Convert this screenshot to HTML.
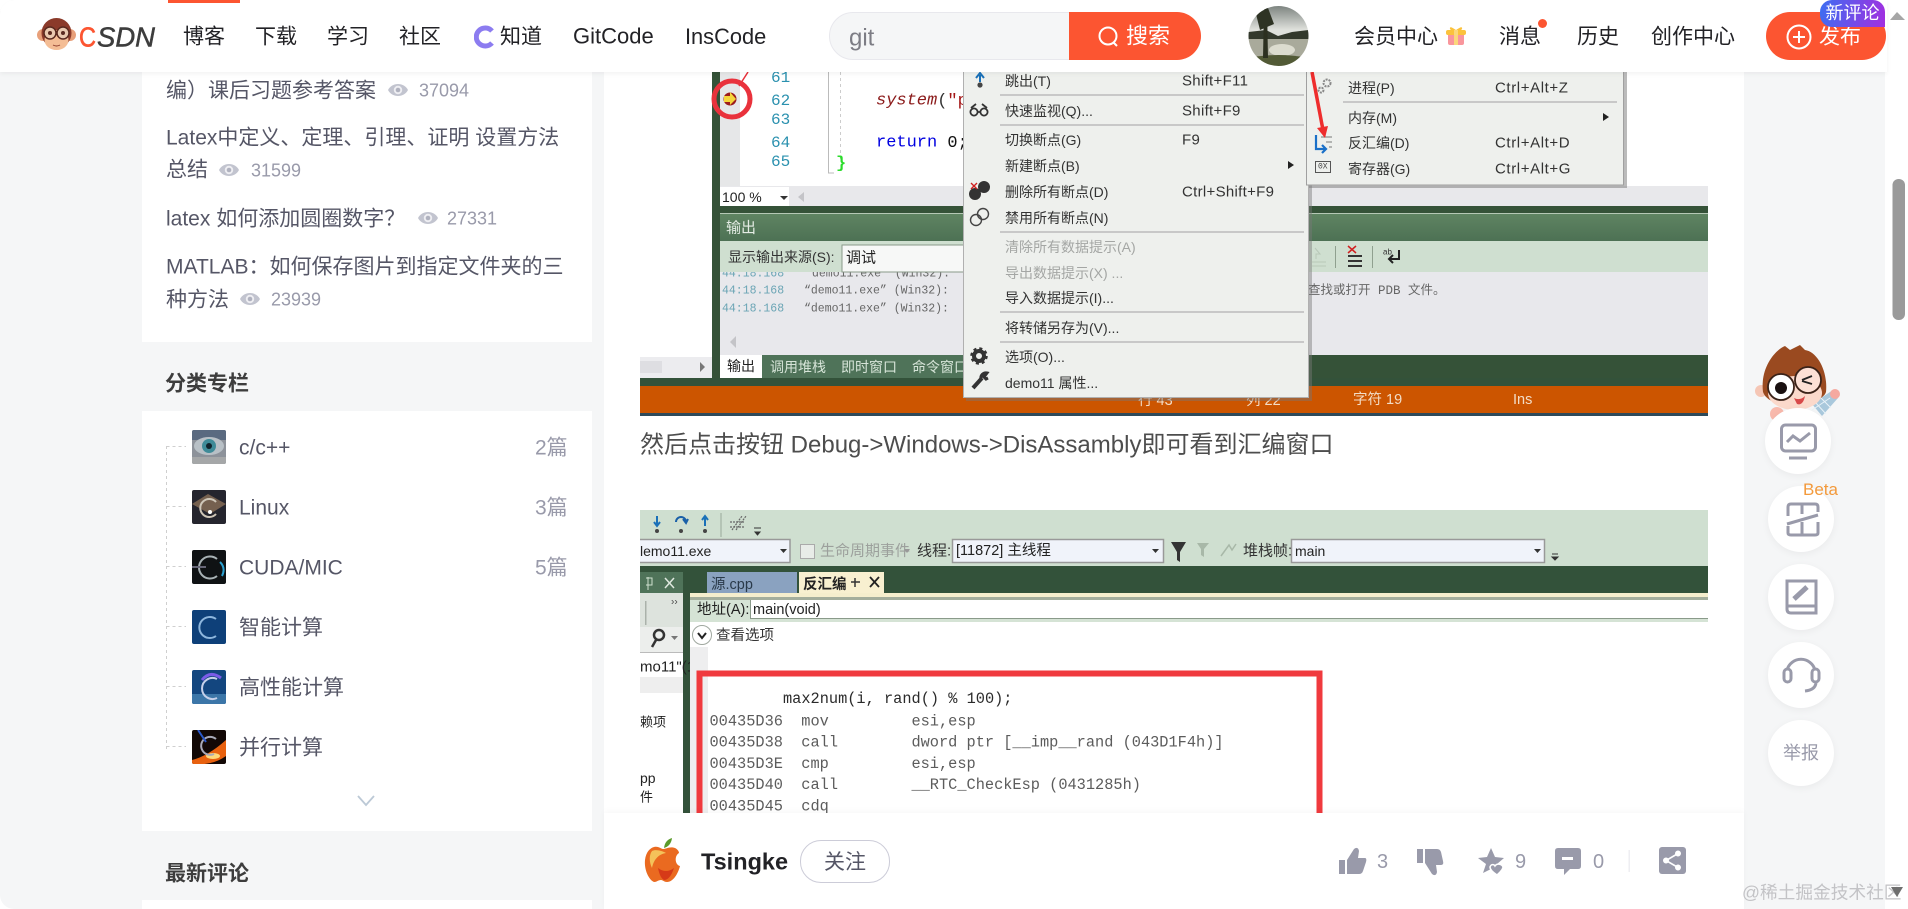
<!DOCTYPE html>
<html lang="zh-CN"><head><meta charset="utf-8"><title>CSDN</title>
<style>
html,body{margin:0;padding:0;width:1908px;height:909px;overflow:hidden;background:#fff}
body{font-family:"Liberation Sans","Noto Sans CJK SC",sans-serif;color:#222226}
#app{position:absolute;left:0;top:0;width:1908px;height:909px;overflow:hidden;border-radius:14px 0 0 14px;background:#fff}
.a{position:absolute}
.t{position:absolute;white-space:nowrap;transform:translateY(calc(-50% + 1px));line-height:1.3}
svg{display:block}
svg text{font-family:"Liberation Sans","Noto Sans CJK SC",sans-serif;dominant-baseline:central;white-space:pre}
.m{font-family:"Liberation Mono","Noto Sans CJK SC",monospace!important}
.nav{font-size:21px;color:#222226}
.side{font-size:21px;color:#555666}
.num{font-size:18px;color:#999aaa}
.cat{font-size:21px;color:#555666}
.cnt{font-size:21px;color:#999aaa}
.head{font-size:21px;font-weight:700;color:#3d3d3d}
.fab{position:absolute;width:66px;height:66px;border-radius:50%;background:#fff;box-shadow:0 2px 8px rgba(0,0,0,.05)}
.thumb{position:absolute;left:192px;width:34px;height:34px;border-radius:2px;overflow:hidden}
</style></head><body>
<div id="app">
<svg width="0" height="0" class="a"><defs>
<symbol id="eye" viewBox="0 0 20 16"><path d="M0 8C4 0 16 0 20 8C16 16 4 16 0 8Z" fill="#c2c4cf"/><circle cx="10" cy="8" r="4.200" fill="#eeeef2"/><circle cx="10" cy="8" r="2.300" fill="#b0b2bf"/></symbol>
</defs></svg>
<div class="a" style="left:0;top:0;width:1885px;height:909px;background:#f5f6f7"></div>
<div class="a" style="left:604px;top:0;width:1140px;height:909px;background:#fff"></div>
<!-- sidebar -->
<div class="a" style="left:142px;top:60px;width:450px;height:282px;background:#fff"></div>
<span class="t side" style="left:166px;top:90px">编）课后习题参考答案</span><svg class="a" style="left:388px;top:82px" width="20" height="16"><use href="#eye"/></svg><span class="t num" style="left:419px;top:90px">37094</span>
<span class="t side" style="left:166px;top:137px">Latex中定义、定理、引理、证明 设置方法</span>
<span class="t side" style="left:166px;top:169px">总结</span><svg class="a" style="left:219px;top:162px" width="20" height="16"><use href="#eye"/></svg><span class="t num" style="left:251px;top:170px">31599</span>
<span class="t side" style="left:166px;top:218px">latex 如何添加圆圈数字？</span><svg class="a" style="left:418px;top:210px" width="20" height="16"><use href="#eye"/></svg><span class="t num" style="left:447px;top:218px">27331</span>
<span class="t side" style="left:166px;top:266px">MATLAB：如何保存图片到指定文件夹的三</span>
<span class="t side" style="left:166px;top:299px">种方法</span><svg class="a" style="left:240px;top:291px" width="20" height="16"><use href="#eye"/></svg><span class="t num" style="left:271px;top:299px">23939</span>
<span class="t head" style="left:165px;top:383px">分类专栏</span>
<div class="a" style="left:142px;top:411px;width:450px;height:420px;background:#fff"></div>
<span class="t head" style="left:165px;top:873px">最新评论</span>
<div class="a" style="left:142px;top:900px;width:450px;height:9px;background:#fff"></div>
<svg class="a" style="left:160px;top:440px" width="34" height="320" fill="none" stroke="#cfcfcf" stroke-dasharray="3 3"><path d="M6.5 6V310M6.5 6.5H26M6.5 66.5H26M6.5 126.5H26M6.5 186.5H26M6.5 246.5H26M6.5 306.5H26"/></svg>
<div class="thumb" style="top:430px"><svg width="34" height="34"><rect width="34" height="34" fill="#8d929a"/><rect width="34" height="10" fill="#5a6a80"/><ellipse cx="17" cy="16" rx="15" ry="9" fill="#b8c0c6"/><circle cx="17" cy="16" r="7" fill="#3f8b98"/><circle cx="17" cy="16" r="3" fill="#10232c"/><rect y="27" width="34" height="7" fill="#a5a7a8"/></svg></div>
<div class="thumb" style="top:490px"><svg width="34" height="34"><rect width="34" height="34" fill="#25252e"/><path d="M0 14L16 4L34 14L18 24Z" fill="#75604f"/><path d="M24 12A9 9 0 1 0 24 24" fill="none" stroke="#cfc6b8" stroke-width="2"/><circle cx="18" cy="22" r="2" fill="#fff"/></svg></div>
<div class="thumb" style="top:550px"><svg width="34" height="34"><rect width="34" height="34" fill="#0f1214"/><path d="M25 9A11 11 0 1 0 25 26" fill="none" stroke="#a8b2b5" stroke-width="2"/><path d="M0 17H14" stroke="#667" stroke-width="2"/><path d="M28 12Q34 18 30 26" fill="none" stroke="#2ba0d0" stroke-width="2"/></svg></div>
<div class="thumb" style="top:610px"><svg width="34" height="34"><rect width="34" height="34" fill="#0e4079"/><path d="M24 9A10.5 10.5 0 1 0 24 26" fill="none" stroke="#8db6dd" stroke-width="2"/></svg></div>
<div class="thumb" style="top:670px"><svg width="34" height="34"><rect width="34" height="34" fill="#13467f"/><rect y="24" width="34" height="10" fill="#3c76a8"/><path d="M25 9A10.5 10.5 0 1 0 25 28" fill="none" stroke="#c5d0ea" stroke-width="2"/><path d="M10 10Q18 0 29 8" fill="none" stroke="#7a5ce8" stroke-width="3"/></svg></div>
<div class="thumb" style="top:730px"><svg width="34" height="34"><rect width="34" height="34" fill="#120806"/><path d="M0 30Q16 26 34 10V26Q20 36 0 34Z" fill="#e8610f"/><ellipse cx="21" cy="26" rx="7" ry="3" fill="#ffd97a"/><path d="M24 9A9 9 0 1 0 22 24" fill="none" stroke="#a9a9b8" stroke-width="2"/><path d="M6 0L14 12" stroke="#2a58c8" stroke-width="2"/></svg></div>
<span class="t cat" style="left:239px;top:447px">c/c++</span><span class="t cnt" style="left:535px;top:447px">2篇</span>
<span class="t cat" style="left:239px;top:507px">Linux</span><span class="t cnt" style="left:535px;top:507px">3篇</span>
<span class="t cat" style="left:239px;top:567px">CUDA/MIC</span><span class="t cnt" style="left:535px;top:567px">5篇</span>
<span class="t cat" style="left:239px;top:627px">智能计算</span>
<span class="t cat" style="left:239px;top:687px">高性能计算</span>
<span class="t cat" style="left:239px;top:747px">并行计算</span>
<svg class="a" style="left:357px;top:795px" width="18" height="12" fill="none" stroke="#bcc9d6" stroke-width="1.8"><path d="M1 1L9 10L17 1"/></svg>

<!-- screenshot 1 -->
<svg class="a" style="left:640px;top:0" width="1068" height="416" viewBox="640 0 1068 416">
<defs><linearGradient id="gh" x1="0" y1="0" x2="0" y2="1"><stop offset="0" stop-color="#5f8462"/><stop offset="1" stop-color="#4d7154"/></linearGradient></defs>
<rect x="640" y="0" width="1068" height="416" fill="#fff"/>
<rect x="640" y="357" width="72" height="21" fill="#ececef"/><rect x="640" y="361" width="22" height="12" fill="#dedee2"/><path d="M700 362L705 367L700 372Z" fill="#777"/>
<rect x="712" y="0" width="996" height="385" fill="#355238"/>
<rect x="720" y="0" width="988" height="186" fill="#fff"/><rect x="720" y="0" width="20" height="186" fill="#e6e7e8"/>
<rect x="720" y="186" width="988" height="20" fill="#e8e8eb"/>
<rect x="720" y="214" width="988" height="27" fill="url(#gh)"/><rect x="720" y="213" width="988" height="1" fill="#b5c8b5"/>
<rect x="720" y="241" width="988" height="114" fill="#e8e8ec"/>
<rect x="720" y="355" width="260" height="23" fill="#4f7359"/>
<rect x="640" y="378" width="1068" height="8" fill="#33523a"/>
<rect x="640" y="386" width="1068" height="27" fill="#cc5500"/><rect x="640" y="413" width="1068" height="3" fill="#2e4a5a"/>
<path d="M748 72L739 86" stroke="#e8303a" stroke-width="1.5"/>
<circle cx="732" cy="99" r="18" fill="none" stroke="#e9323c" stroke-width="5"/><circle cx="730" cy="99" r="6.500" fill="#9c1c1c"/><path d="M724 96H730V92L736 99L730 105V102H724Z" fill="#f5d63c"/>
<g class="m" font-size="16" fill="#2b91af"><text class="m" x="771" y="78">61</text><text class="m" x="771" y="101">62</text><text class="m" x="771" y="120">63</text><text class="m" x="771" y="143">64</text><text class="m" x="771" y="162">65</text></g>
<path d="M828.5 72V173H834" fill="none" stroke="#bbb"/><path d="M840.5 72V160" fill="none" stroke="#ccc" stroke-dasharray="3 3"/>
<text class="m" x="876" y="101" font-size="17" font-style="italic" fill="#8b1a1a">system<tspan font-style="normal" fill="#333">(</tspan><tspan font-style="normal" fill="#a31515">"p</tspan></text>
<text class="m" x="876" y="143" font-size="17" fill="#0000e0">return <tspan fill="#111">0;</tspan></text>
<text class="m" x="836" y="164" font-size="17" font-weight="700" fill="#2bdc2b">}</text>
<rect x="720" y="187" width="69" height="19" fill="#fff"/><text x="722" y="197" font-size="14" fill="#222">100 %</text><path d="M780 196H788L784 200Z" fill="#333"/><path d="M804 192V202L798 197Z" fill="#c4c4c8"/>
<text x="726" y="228" font-size="15" fill="#e4ece4">输出</text>
<g class="m" font-size="11.500"><text class="m" x="722" y="274" fill="#6ba5b5">44:18.168</text><text class="m" x="812" y="274" fill="#666">demo11.exe  (Win32):</text>
<text class="m" x="722" y="291" fill="#6ba5b5">44:18.168</text><text class="m" x="804" y="291" fill="#666">“demo11.exe” (Win32):</text>
<text class="m" x="722" y="309" fill="#6ba5b5">44:18.168</text><text class="m" x="804" y="309" fill="#666">“demo11.exe” (Win32):</text></g>
<rect x="720" y="241" width="988" height="31" fill="#cfdfd0"/>
<text x="728" y="257" font-size="14" fill="#333">显示输出来源(S):</text>
<rect x="842" y="245" width="125" height="27" fill="#f7f8f7" stroke="#8a9a8a"/><text x="846" y="258" font-size="15" fill="#222">调试</text>
<text x="1308" y="291" font-size="12.500" fill="#666" class="m">查找或打开 PDB 文件。</text>
<path d="M736 336V348L730 342Z" fill="#c4c4c8"/>
<rect x="720" y="355" width="42" height="23" fill="#fff"/><text x="727" y="366" font-size="14" fill="#222">输出</text>
<g font-size="14" fill="#d6e4d8"><text x="770" y="367">调用堆栈</text><text x="841" y="367">即时窗口</text><text x="912" y="367">命令窗口</text></g>
<g font-size="14.5" fill="#f2dcc6"><text x="1138" y="401">行 43</text><text x="1246" y="401">列 22</text><text x="1353" y="400">字符 19</text><text x="1513" y="400">Ins</text></g>
<path d="M1315 248L1320 254H1316V259M1312 262H1326M1312 266H1326" stroke="#b8c8b8" fill="none"/>
<rect x="1335" y="246" width="1" height="22" fill="#8fa08f"/><path d="M1348 246L1356 253M1356 246L1348 253" stroke="#d02020" stroke-width="1.5"/><path d="M1348 256H1362M1348 261H1362M1348 266H1362" stroke="#333" stroke-width="2"/><rect x="1372" y="246" width="1" height="22" fill="#8fa08f"/><text x="1383" y="252" font-size="8" fill="#333">ab</text><path d="M1399 250V259H1390M1393 255L1389 259L1393 263" fill="none" stroke="#222" stroke-width="2"/>
<!-- menu 1 -->
<rect x="966" y="0" width="346" height="401" fill="#777" opacity=".45"/>
<rect x="963.5" y="-5" width="345" height="402.5" fill="#eef0ed" stroke="#b0b0b0"/>
<g stroke="#c8c8c8" stroke-width="2"><path d="M1000 95H1304M1000 125H1304M1000 232H1304M1000 312H1304M1000 342H1304"/></g>
<g font-size="14" fill="#333" transform="translate(0 1)">
<text x="1005" y="80">跳出(T)</text><text x="1182" y="80" font-size="15" letter-spacing=".3">Shift+F11</text>
<text x="1005" y="110">快速监视(Q)...</text><text x="1182" y="110" font-size="15" letter-spacing=".3">Shift+F9</text>
<text x="1005" y="139">切换断点(G)</text><text x="1182" y="139" font-size="15" letter-spacing=".3">F9</text>
<text x="1005" y="165">新建断点(B)</text>
<text x="1005" y="191">删除所有断点(D)</text><text x="1182" y="191" font-size="15" letter-spacing=".3">Ctrl+Shift+F9</text>
<text x="1005" y="217">禁用所有断点(N)</text>
<text x="1005" y="246" fill="#a4a6a4">清除所有数据提示(A)</text>
<text x="1005" y="272" fill="#a4a6a4">导出数据提示(X) ...</text>
<text x="1005" y="297">导入数据提示(I)...</text>
<text x="1005" y="327">将转储另存为(V)...</text>
<text x="1005" y="356">选项(O)...</text>
<text x="1005" y="382">demo11 属性...</text></g>
<path d="M1288 161L1294 165L1288 169Z" fill="#222"/>
<path d="M980 82V75M976 78L980 73L984 78" stroke="#1a70b8" stroke-width="2" fill="none"/><circle cx="980" cy="85" r="2.6" fill="#444"/>
<g fill="none" stroke="#333" stroke-width="1.8"><circle cx="974" cy="112" r="3.6"/><circle cx="984" cy="112" r="3.6"/><path d="M971 108L976 104M987 108L982 104M977 112H981"/></g>
<circle cx="975" cy="194" r="6" fill="#333"/><circle cx="984" cy="187" r="6" fill="#333"/><path d="M971 183L977 189M977 183L971 189" stroke="#d02020" stroke-width="1.4"/>
<g fill="none" stroke="#444" stroke-width="1.4"><circle cx="976" cy="220" r="5.5"/><circle cx="983" cy="214" r="5.5"/></g>
<circle cx="979" cy="356" r="5" fill="none" stroke="#333" stroke-width="4"/><circle cx="979" cy="356" r="7.5" fill="none" stroke="#333" stroke-width="2.5" stroke-dasharray="3 2.9"/>
<path d="M973 388L982 378" stroke="#333" stroke-width="4"/><path d="M981 379A5 5 0 0 1 987 373L984 377L986 379L988 378" fill="none" stroke="#333" stroke-width="3"/>
<!-- menu 2 -->
<rect x="1309" y="0" width="318" height="188" fill="#777" opacity=".5"/>
<rect x="1306.5" y="-5" width="317" height="190" fill="#eef0ed" stroke="#a0a0a0"/>
<path d="M1343 102H1617" stroke="#c8c8c8" stroke-width="2"/>
<g font-size="14" fill="#333" transform="translate(0 1)"><text x="1348" y="87">进程(P)</text><text x="1495" y="87" font-size="15" letter-spacing=".6">Ctrl+Alt+Z</text>
<text x="1348" y="117">内存(M)</text><text x="1348" y="142">反汇编(D)</text><text x="1495" y="142" font-size="15" letter-spacing=".6">Ctrl+Alt+D</text><text x="1348" y="168">寄存器(G)</text><text x="1495" y="168" font-size="15" letter-spacing=".6">Ctrl+Alt+G</text></g>
<path d="M1603 113L1609 117L1603 121Z" fill="#222"/>
<circle cx="1327" cy="83" r="3.5" fill="none" stroke="#888" stroke-width="2" stroke-dasharray="2 1"/><circle cx="1321" cy="90" r="2.5" fill="none" stroke="#888" stroke-width="2" stroke-dasharray="2 1"/>
<path d="M1316 135V149H1325M1322 145L1326 149L1322 153" fill="none" stroke="#1a70c8" stroke-width="2.2"/><path d="M1321 137H1332M1326 142H1332M1329 147H1332" stroke="#777"/>
<rect x="1315.5" y="161.5" width="15" height="11" fill="none" stroke="#555"/><text class="m" x="1318" y="167" font-size="8" fill="#444">0X</text>
<path d="M1312 72L1323 130" stroke="#ee2d2d" stroke-width="3.5"/><path d="M1317 128L1325 138L1328 126Z" fill="#ee2d2d"/>
</svg>

<span class="t" style="left:640px;top:444px;font-size:24px;color:#4d4d4d">然后点击按钮 Debug-&gt;Windows-&gt;DisAssambly即可看到汇编窗口</span>

<!-- screenshot 2 -->
<svg class="a" style="left:640px;top:510px" width="1068" height="303" viewBox="640 510 1068 303">
<rect x="640" y="510" width="1068" height="303" fill="#fff"/>
<rect x="640" y="510" width="1068" height="56" fill="#cfdfd0"/>
<g fill="none" stroke="#1a70b8" stroke-width="2"><path d="M657 516V525M654 522L657 526L660 522"/><path d="M676 522A5 5 0 0 1 686 522M683 519L686 523L688 519" stroke="#1a60a8"/><path d="M705 526V517M702 520L705 516L708 520"/></g>
<g fill="#444"><circle cx="657" cy="531" r="2"/><circle cx="681" cy="531" r="2"/><circle cx="705" cy="531" r="2"/></g>
<rect x="720.500" y="513" width="1" height="24" fill="#9aa89a"/>
<path d="M732 530L742 516M736 530L746 516M730 522H744M730 527H744" stroke="#666" stroke-width="1.2" stroke-dasharray="2 1"/>
<path d="M754 528H761M755 532H760L757.500 535Z" stroke="#333" fill="#333"/>
<rect x="630" y="539.500" width="160" height="23" fill="#f0f3fa" stroke="#999" stroke-width="1.500"/><text x="640" y="551" font-size="14" fill="#222">lemo11.exe</text><path d="M780 549H787L783.500 553Z" fill="#333"/>
<rect x="800.500" y="544.500" width="14" height="14" fill="#e8ece8" stroke="#aaa"/><text x="820" y="551" font-size="15" fill="#9ca09c">生命周期事件</text><path d="M904 549H910L907 553Z" fill="#999"/><text x="917" y="551" font-size="15" fill="#333">线程:</text>
<rect x="952.500" y="539.500" width="211" height="23" fill="#f0f3fa" stroke="#999" stroke-width="1.500"/><text x="956" y="551" font-size="14.500" fill="#222">[11872] 主线程</text><path d="M1152 549H1159L1155.500 553Z" fill="#333"/>
<path d="M1171 542H1186L1180 552V562L1177 560V552Z" fill="#333"/><path d="M1197 543H1209L1204 549V557L1201 555V549Z" fill="#a8b8a8"/><path d="M1221 556L1229 545L1232 550L1236 544" fill="none" stroke="#a8b8a8" stroke-width="1.500"/>
<text x="1243" y="551" font-size="15" fill="#333">堆栈帧:</text>
<rect x="1291.500" y="539.500" width="253" height="23" fill="#f0f3fa" stroke="#999" stroke-width="1.500"/><text x="1295" y="551" font-size="14" fill="#222">main</text><path d="M1534 549H1541L1537.500 553Z" fill="#333"/>
<path d="M1552 554H1558M1552 557H1558L1555 560Z" stroke="#333" fill="#333"/>
<rect x="640" y="566" width="1068" height="27" fill="#33523a"/>
<rect x="640" y="572" width="43" height="21" fill="#4f7359"/><path d="M648 577V590M646 578H652V585H646" stroke="#cfe0cf" fill="none"/><path d="M665 578L674 588M674 578L665 588" stroke="#dfe8df" stroke-width="1.500"/>
<rect x="707" y="572" width="90" height="21" fill="#8aa2c0"/><text x="711" y="585" font-size="14.500" fill="#2a3a4a">源.cpp</text>
<rect x="799" y="572" width="85" height="21" fill="#f8f0d0"/><text x="803" y="585" font-size="14.500" font-weight="700" fill="#222">反汇编</text><path d="M851 582H860M855 578V587" stroke="#333" stroke-width="1.500"/><path d="M870 577L879 587M879 577L870 587" stroke="#222" stroke-width="1.800"/>
<rect x="683" y="566" width="7" height="247" fill="#33523a"/>
<rect x="640" y="593" width="43" height="34" fill="#dde3dd"/><rect x="645" y="601" width="1.500" height="24" fill="#aab2aa"/><text x="671" y="602" font-size="10" fill="#444">››</text>
<rect x="640" y="627" width="43" height="25" fill="#eceeec"/><circle cx="659" cy="635" r="5" fill="none" stroke="#333" stroke-width="2.500"/><path d="M656 640L652 647" stroke="#333" stroke-width="2.500"/><path d="M671 636H678L674.500 640Z" fill="#777"/>
<rect x="640" y="652" width="43" height="1" fill="#bbb"/>
<text x="640" y="667" font-size="15" fill="#222">mo11"(1</text>
<rect x="640" y="677" width="43" height="16" fill="#eeeeee"/>
<text x="640" y="722" font-size="13" fill="#222">赖项</text><text x="640" y="778" font-size="14" fill="#222">pp</text><text x="640" y="797" font-size="13" fill="#222">件</text>
<rect x="690" y="593" width="1018" height="4" fill="#f5eecd"/><rect x="690" y="597" width="1018" height="3" fill="#a4ae9c"/>
<rect x="690" y="600" width="1018" height="22" fill="#d5e3d5"/>
<text x="697" y="610" font-size="14.500" fill="#222">地址(A):</text>
<rect x="750" y="600" width="958" height="18" fill="#fff"/><rect x="750" y="600" width="1" height="18" fill="#8a9a8a"/><rect x="750" y="618" width="958" height="1" fill="#8a9a8a"/>
<text x="753" y="610" font-size="14.500" fill="#222">main(void)</text>
<circle cx="702" cy="635" r="9.500" fill="#fff" stroke="#a0a8a0"/><path d="M698 633L702 638L706 633" fill="none" stroke="#222" stroke-width="2"/>
<text x="716" y="636" font-size="14.500" fill="#333">查看选项</text>
<rect x="690" y="647" width="18" height="166" fill="#eeeeef"/>
<path d="M699.500 813V673.500H1319.500V813" fill="none" stroke="#f03a3e" stroke-width="6"/>
<g class="m" font-size="15.300" fill="#5c5c5c"><text class="m" x="783" y="699" fill="#2a2a2a">max2num(i, rand() % 100);</text>
<text class="m" x="709.500" y="721.500">00435D36  mov         esi,esp</text>
<text class="m" x="709.500" y="742.500">00435D38  call        dword ptr [__imp__rand (043D1F4h)]</text>
<text class="m" x="709.500" y="764">00435D3E  cmp         esi,esp</text>
<text class="m" x="709.500" y="785">00435D40  call        __RTC_CheckEsp (0431285h)</text>
<text class="m" x="709.500" y="806.500">00435D45  cdq</text></g>
</svg>

<!-- bottom bar -->
<div class="a" style="left:604px;top:813px;width:1140px;height:96px;background:#fff;box-shadow:0 -2px 6px rgba(0,0,0,.03)"></div>
<svg class="a" style="left:644px;top:838px" width="37" height="46"><path d="M20 10Q21 2 28 0Q27 8 20 10Z" fill="#5a9a2a"/><path d="M10 9C15 8 17 11 19 11C22 11 26 8 31 10C33 11 35 13 35 15C30 18 31 27 36 28C34 36 29 44 23 44C20 44 19 42 17 42C14 42 13 44 10 44C5 42 0 32 1 22C2 14 6 10 10 9Z" fill="#ea6a20"/><path d="M8 13C12 11 18 13 22 15C16 16 10 20 8 30C5 24 5 17 8 13Z" fill="#f4c25a"/><path d="M14 30Q22 36 30 30Q26 42 20 42Q16 40 14 30Z" fill="#d63a18"/></svg>
<span class="t" style="left:701px;top:861px;font-size:23.500px;font-weight:700;color:#222226">Tsingke</span>
<div class="a" style="left:800px;top:840px;width:88px;height:41px;border:1px solid #ccccd8;border-radius:21px;text-align:center;line-height:43px;font-size:21px;color:#555666">关注</div>
<svg class="a" style="left:1330px;top:840px" width="370" height="44" viewBox="1330 840 370 44" fill="#999aaa">
<path d="M1339 860H1345V874H1339ZM1347 860L1354 849Q1358 846 1359 851L1358 858H1365Q1367 858 1366 862L1363 871Q1362 874 1359 874H1347Z"/>
<path d="M1417 849H1423V863H1417ZM1425 849H1437Q1440 849 1441 852L1443 861Q1444 865 1441 865H1436L1437 872Q1436 877 1432 874L1425 863Z"/>
<path d="M1491 848L1495 857L1504 858L1497 864L1500 873L1491 869L1483 873L1486 864L1478 858L1487 857Z"/><path d="M1495 866C1497 863 1502 864 1503 867C1503 870 1499 873 1497 875C1494 873 1490 870 1490 867C1491 864 1494 864 1495 866Z" stroke="#fff" stroke-width="1.500"/>
<path d="M1558 848H1578Q1581 848 1581 851V866Q1581 869 1578 869H1570L1564 875V869H1558Q1555 869 1555 866V851Q1555 848 1558 848Z"/><rect x="1562" y="857" width="11" height="3" fill="#fff"/>
<rect x="1628.500" y="850" width="1.500" height="22" fill="#eeeef2"/>
<rect x="1659" y="847" width="27" height="27" rx="3"/><g fill="#fff" stroke="#fff"><circle cx="1678" cy="853.500" r="2.500"/><circle cx="1666" cy="860.500" r="2.500"/><circle cx="1678" cy="867.500" r="2.500"/><path d="M1678 853.500L1666 860.500L1678 867.500" fill="none" stroke-width="1.600"/></g>
</svg>
<span class="t" style="left:1377px;top:861px;font-size:20px;color:#999aaa">3</span>
<span class="t" style="left:1515px;top:861px;font-size:20px;color:#999aaa">9</span>
<span class="t" style="left:1593px;top:861px;font-size:20px;color:#999aaa">0</span>

<!-- right floats -->
<svg class="a" style="left:1755px;top:343px" width="90" height="80" viewBox="1755 343 90 80">
<path d="M1812 404L1833 390L1838 398L1822 416Z" fill="#a9c8dc"/><path d="M1815 402L1826 414M1821 398L1831 408M1812 410L1830 398" stroke="#e8f2f8"/>
<circle cx="1835" cy="394" r="5" fill="#f5a9a0"/>
<circle cx="1761" cy="391" r="6" fill="#f5c6b5"/>
<path d="M1763 392C1760 368 1775 350 1785 346L1790 350L1800 345L1805 350C1818 352 1828 372 1826 392C1822 406 1770 412 1763 392Z" fill="#9a4a20"/>
<ellipse cx="1795" cy="393" rx="27" ry="17" fill="#fbd9cb"/>
<circle cx="1781" cy="387" r="13" fill="#fff" stroke="#3a2218" stroke-width="1.800"/><circle cx="1781" cy="388" r="6" fill="#1a1010"/>
<circle cx="1808" cy="380" r="13" fill="#fce0d5" stroke="#3a2218" stroke-width="1.800"/><path d="M1802 380L1812 376M1802 381L1812 384" stroke="#222" stroke-width="1.800"/>
<path d="M1794 398Q1800 401 1805 396Q1803 406 1797 404Z" fill="#d84a4a"/>
<circle cx="1777" cy="414" r="7" fill="#f8b9ac"/>
</svg>
<div class="fab" style="left:1765px;top:408px"></div>
<div class="fab" style="left:1768px;top:486px"></div>
<div class="fab" style="left:1768px;top:564px"></div>
<div class="fab" style="left:1768px;top:642px"></div>
<div class="fab" style="left:1768px;top:720px;text-align:center;line-height:66px;font-size:18px;color:#999aaa">举报</div>
<span class="t" style="left:1803px;top:489px;font-size:17px;color:#f39a3c">Beta</span>
<svg class="a" style="left:1775px;top:418px" width="60" height="280" viewBox="1775 418 60 280" fill="none" stroke="#999aaa" stroke-width="3">
<rect x="1781.500" y="425" width="34" height="26" rx="4"/><path d="M1787 442L1793 436L1800 441L1810 433"/><path d="M1789 458H1807"/>
<path d="M1788 516V507Q1788 504 1791 504H1815Q1818 504 1818 507V512M1802 504V514M1787 524L1818 515M1788 526V533Q1788 535 1791 535H1815Q1818 535 1818 533V522M1802 522V535"/>
<path d="M1787 581H1816V613H1791Q1787 613 1787 609ZM1787 606H1816"/><path d="M1794 599L1807 587" stroke-width="5"/>
<path d="M1787 670A14.500 14.500 0 0 1 1815 670"/><rect x="1784" y="669" width="7" height="13" rx="3.500"/><rect x="1812" y="669" width="7" height="13" rx="3.500"/><path d="M1816 683Q1815 690 1805 691"/>
</svg>
<span class="t" style="left:1742px;top:892px;font-size:17.700px;color:#c3c3c6;white-space:nowrap">@稀土掘金技术社区</span>

<!-- header -->
<div class="a" style="left:0;top:0;width:1887px;height:72px;background:#fff;box-shadow:0 2px 5px rgba(0,0,0,.05);border-radius:14px 0 0 0"></div>
<div class="a" style="left:168px;top:0;width:72px;height:3px;background:#fc5531"></div>
<svg class="a" style="left:36px;top:16px" width="122" height="36" viewBox="36 16 122 36">
<circle cx="43" cy="35" r="6" fill="#e8a07a"/><circle cx="70" cy="35" r="6" fill="#e8a07a"/>
<circle cx="56.500" cy="33" r="15" fill="#8b3a2a"/>
<ellipse cx="56.500" cy="40" rx="12" ry="10" fill="#f4bd95"/>
<circle cx="50" cy="33" r="6" fill="#e9c9b0" stroke="#5a2a20" stroke-width="1.500"/><circle cx="63" cy="33" r="6" fill="#e9c9b0" stroke="#5a2a20" stroke-width="1.500"/><circle cx="50" cy="33" r="2" fill="#5a2a20"/><circle cx="63" cy="33" r="2" fill="#5a2a20"/>
<path d="M53 45Q56.500 47 60 45" stroke="#8b3a2a" fill="none"/>
<text x="79" y="37" font-size="28" fill="#fc5531" stroke="#fc5531" stroke-width=".6" textLength="17" lengthAdjust="spacingAndGlyphs">C</text>
<text x="97" y="37" font-size="28" font-style="italic" fill="#3d3d3d" stroke="#3d3d3d" stroke-width=".5" textLength="58" lengthAdjust="spacingAndGlyphs">SDN</text>
</svg>
<span class="t nav" style="left:183px;top:36px">博客</span>
<span class="t nav" style="left:255px;top:36px">下载</span>
<span class="t nav" style="left:327px;top:36px">学习</span>
<span class="t nav" style="left:399px;top:36px">社区</span>
<svg class="a" style="left:474px;top:25px" width="22" height="24"><path d="M18 6A9 9 0 1 0 18 18" fill="none" stroke="#8c7cf0" stroke-width="5"/></svg>
<span class="t nav" style="left:500px;top:36px">知道</span>
<span class="t nav" style="left:573px;top:36px;font-size:22px">GitCode</span>
<span class="t nav" style="left:685px;top:36px;font-size:21.800px">InsCode</span>
<div class="a" style="left:829px;top:12px;width:245px;height:46px;background:#f5f6f7;border:1px solid #e8e8ed;border-radius:24px 0 0 24px"></div>
<span class="t" style="left:849px;top:37px;font-size:24px;color:#7d7d85">git</span>
<div class="a" style="left:1069px;top:12px;width:132px;height:48px;background:#fc5531;border-radius:0 24px 24px 0"></div>
<svg class="a" style="left:1096px;top:25px" width="24" height="24" fill="none" stroke="#fff" stroke-width="2"><circle cx="12" cy="11" r="8.500"/><path d="M17 17L21 21"/></svg>
<span class="t" style="left:1126px;top:36px;font-size:22px;color:#fff">搜索</span>
<svg class="a" style="left:1248px;top:6px" width="61" height="60"><defs><clipPath id="av"><circle cx="30.500" cy="30" r="30"/></clipPath><linearGradient id="sk" x1="0" y1="0" x2="0" y2="1"><stop offset="0" stop-color="#7d8480"/><stop offset=".7" stop-color="#dfe1dc"/></linearGradient></defs><g clip-path="url(#av)"><rect width="61" height="34" fill="url(#sk)"/><path d="M0 26L18 24L30 30L44 26L61 24V33H0Z" fill="#33392c"/><rect y="33" width="61" height="18" fill="#a9aa9b"/><ellipse cx="34" cy="44" rx="13" ry="6" fill="#dcdccf"/><path d="M0 52Q30 46 61 52V60H0Z" fill="#525a36"/><path d="M16 0H19L20 52H15Z" fill="#2c3020"/><path d="M8 8L20 2L26 18L12 24Z" fill="#2e3324"/></g></svg>
<span class="t nav" style="left:1354px;top:36px">会员中心</span>
<svg class="a" style="left:1446px;top:26px" width="20" height="19"><rect x="2" y="6" width="16" height="13" rx="2" fill="#f9969c"/><rect x="0" y="4" width="20" height="5" rx="2" fill="#fbc23c"/><path d="M10 4Q3 -1 4 3Q5 5 10 4Q17 -1 16 3Q15 5 10 4" fill="#fbc23c"/><rect x="8" y="4" width="4" height="15" fill="#fbd77c"/></svg>
<span class="t nav" style="left:1499px;top:36px">消息</span>
<div class="a" style="left:1538px;top:19px;width:9px;height:9px;border-radius:50%;background:#fc5531"></div>
<span class="t nav" style="left:1577px;top:36px">历史</span>
<span class="t nav" style="left:1651px;top:36px">创作中心</span>
<div class="a" style="left:1766px;top:12px;width:120px;height:48px;background:#fc5531;border-radius:24px"></div>
<svg class="a" style="left:1786px;top:24px" width="28" height="26" fill="none" stroke="#fff" stroke-width="2"><circle cx="13" cy="13" r="11.500"/><path d="M13 7V19M7 13H19"/></svg>
<span class="t" style="left:1819px;top:36px;font-size:21px;color:#fff">发布</span>
<div class="a" style="left:1820px;top:0;width:65px;height:27px;border-radius:12px 12px 0 12px;background:linear-gradient(100deg,#3c6ef2,#a22ee0);color:#fff;font-size:18px;line-height:26px;text-align:center">新评论</div>
<!-- scrollbar -->
<svg class="a" style="left:1887px;top:0" width="21" height="909"><path d="M3 20L10 12L18 20Z" fill="#a6a6a6"/><rect x="5.500" y="179" width="12.500" height="141" rx="6" fill="#9a9a9a"/><path d="M4 887H16L10 897Z" fill="#6f6f6f"/></svg>
</div>
</body></html>
